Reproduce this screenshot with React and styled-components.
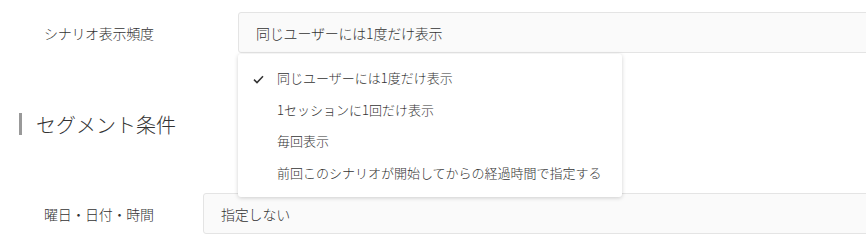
import React from "react";
import styled, { createGlobalStyle } from "styled-components";

const GlobalStyle = createGlobalStyle`
  body {
    margin: 0;
    background: #fff;
    font-family: "Noto Sans CJK JP", "Noto Sans", sans-serif;
    font-weight: 300;
    color: #333;
  }
`;

const Page = styled.div`
  width: 866px;
  height: 247px;
  overflow: hidden;
  padding-top: 12px;
  box-sizing: border-box;
`;

const Row = styled.div`
  display: grid;
  grid-template-columns: ${(p) => p.labelWidth}px 1fr;
  align-items: center;
  margin-right: -10px;
`;

const Label = styled.div`
  padding-left: 44px;
  font-size: 14px;
  letter-spacing: -0.3px;
  color: #333;
`;

const SelectWrap = styled.div`
  position: relative;
`;

const SelectBox = styled.div`
  height: 41px;
  box-sizing: border-box;
  display: flex;
  align-items: center;
  padding-left: 17px;
  background: #fafafa;
  border: 1px solid #e4e4e4;
  border-radius: 3px;
  font-size: 14px;
  letter-spacing: -0.2px;
  color: #333;
`;

const Menu = styled.ul`
  position: absolute;
  top: calc(100% + 1px);
  left: 0;
  width: 384px;
  margin: 0;
  padding: 8px 0 9px;
  list-style: none;
  background: #fff;
  border-radius: 3px;
  box-shadow: 0 1px 4px rgba(0, 0, 0, 0.18);
  z-index: 2;
`;

const Item = styled.li`
  display: flex;
  align-items: center;
  height: 31.5px;
  line-height: 1;
  white-space: nowrap;
  padding-left: 39px;
  font-size: 13px;
  letter-spacing: 0;
  color: #333;
  position: relative;
`;

const Check = styled.svg`
  position: absolute;
  left: 15px;
  top: 50%;
  margin-top: -3px;
`;

const Heading = styled.h2`
  margin: 60px 0 0 19px;
  display: flex;
  align-items: center;
  height: 22px;
  border-left: 3px solid #999;
  padding-left: 14px;
  font-size: 20px;
  font-weight: 300;
  color: #333;
`;

const Spacer = styled.div`
  height: ${(p) => p.size}px;
`;

const options = [
  "同じユーザーには1度だけ表示",
  "1セッションに1回だけ表示",
  "毎回表示",
  "前回このシナリオが開始してからの経過時間で指定する",
];

export default function App() {
  return (
    <Page>
      <GlobalStyle />
      <Row labelWidth={238}>
        <Label>シナリオ表示頻度</Label>
        <SelectWrap>
          <SelectBox>{options[0]}</SelectBox>
          <Menu>
            {options.map((o, i) => (
              <Item key={o}>
                {i === 0 && (
                  <Check width="11" height="9" viewBox="0 0 11 9">
                    <path d="M1 4.6 L4 7.6 L10 1.2" fill="none" stroke="#333" strokeWidth="1.5" />
                  </Check>
                )}
                {o}
              </Item>
            ))}
          </Menu>
        </SelectWrap>
      </Row>
      <Heading>セグメント条件</Heading>
      <Spacer size={58} />
      <Row labelWidth={203}>
        <Label>曜日・日付・時間</Label>
        <SelectBox>指定しない</SelectBox>
      </Row>
    </Page>
  );
}
